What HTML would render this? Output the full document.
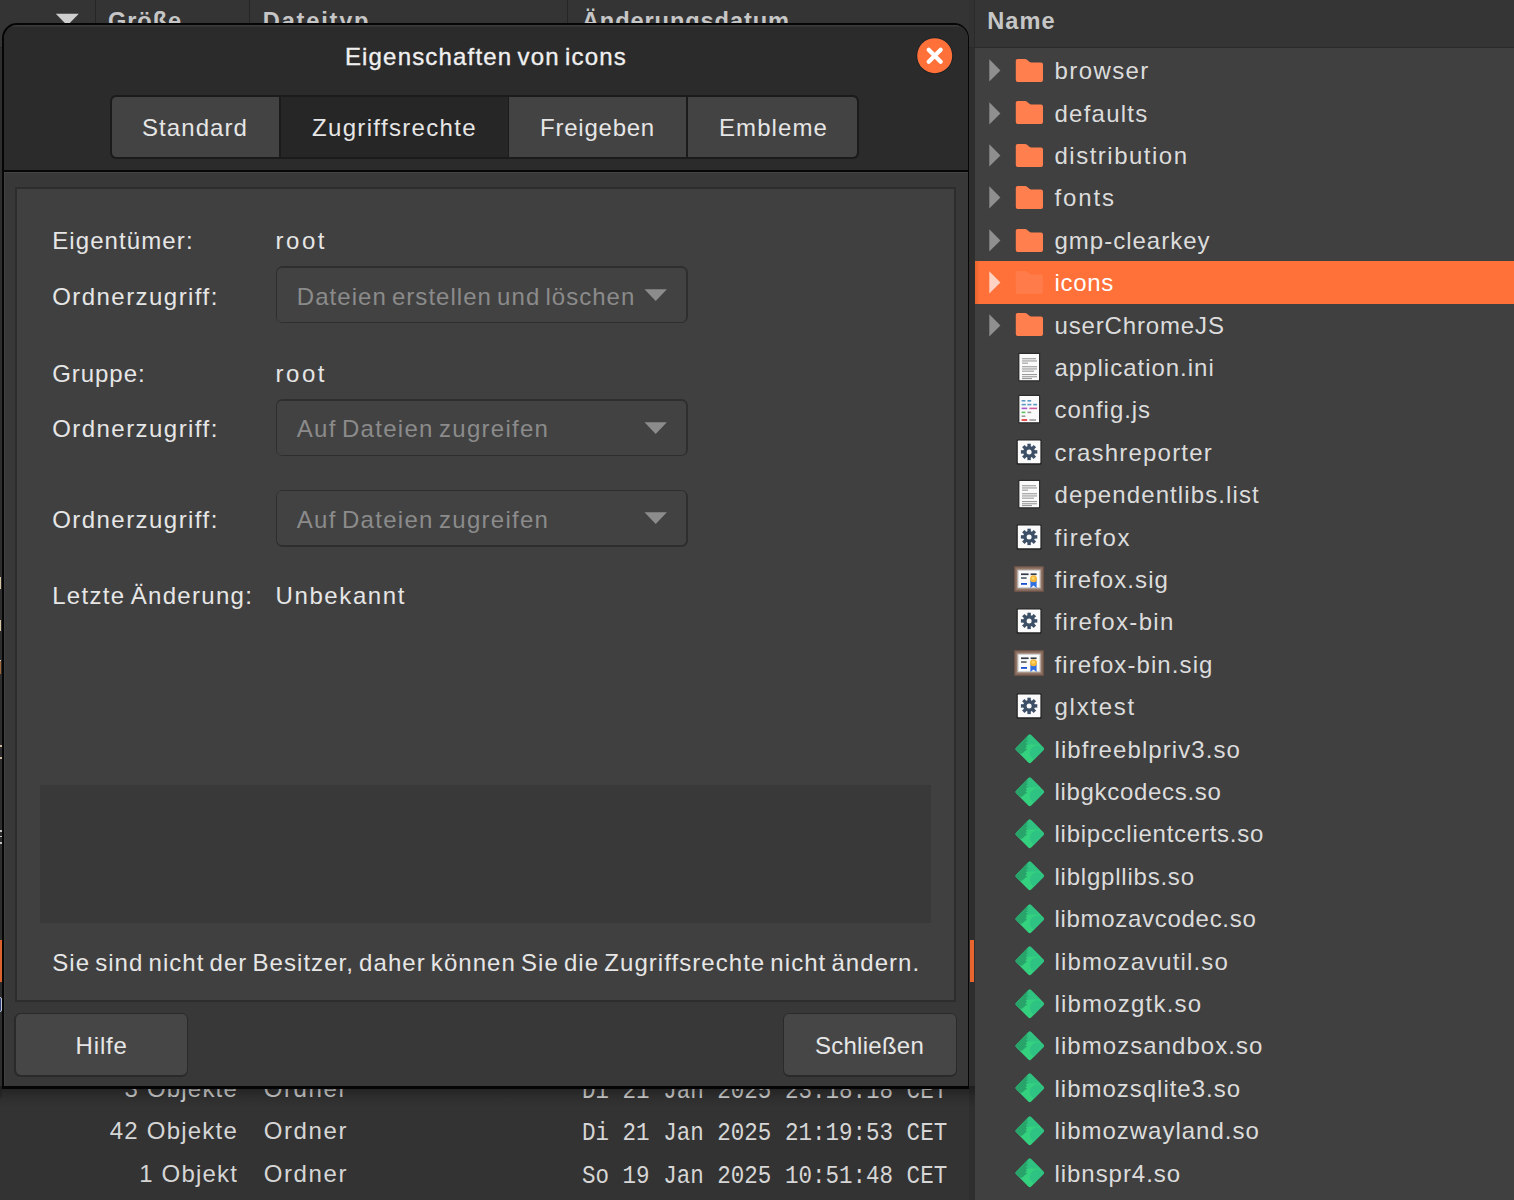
<!DOCTYPE html><html lang="de"><head><meta charset="utf-8"><title>Eigenschaften von icons</title><style>

*{margin:0;padding:0;box-sizing:border-box}
html,body{width:1514px;height:1200px;overflow:hidden;background:#333}
body{position:relative;font-family:"Liberation Sans",sans-serif;font-size:24.0px;color:#dedede}
.a{position:absolute}
.t{position:absolute;white-space:pre;line-height:30px;height:30px}
.d,.dis,.ti{word-spacing:-2.6px}
.f{color:#dcdcdc}.sel{color:#fff}
.hd{font-weight:bold;color:#c6c6c6;font-size:23.6px}
.b{color:#d6d6d6}
.m{font-family:"Liberation Mono",monospace;color:#d6d6d6;transform-origin:0 50%;font-size:25.4px}
.ti{color:#f0f0f0;-webkit-text-stroke:0.35px #f0f0f0}
.d{color:#e6e6e6}
.dis{color:#8b8b8b}
.ic{position:absolute;overflow:visible}
.cb{left:275.6px;width:412.2px;height:57px;background:#2e2e2e;border-radius:6.5px}
.cbi{left:277.4px;width:408.6px;height:53.4px;background:#424242;border-radius:4.5px}
.bt{top:1012.8px;width:174.4px;height:64.2px;background:#2a2a2a;border-radius:6.5px}
.bti{top:1014.4px;width:171.2px;height:61px;background:#464646;border-radius:5px}

</style></head><body>
<svg width="0" height="0" style="position:absolute"><defs>
<path id="folder" d="M2.6 1 H10.2 Q11.2 1 12 1.7 L14.4 3.8 Q15.1 4.4 16.2 4.4 H26 Q28 4.4 28 6.4 V22 Q28 24 26 24 H2.8 Q0.8 24 0.8 22 V2.8 Q0.8 1 2.6 1 Z"/>
<g id="i-txt">
<rect x="4.2" y="0.8" width="22" height="28.6" rx="1" fill="#2c2c2c"/>
<rect x="5.4" y="2" width="19.6" height="26.2" fill="#fafafa"/>
<g fill="#9a9a9a"><rect x="8" y="6.2" width="14" height="1.1"/><rect x="8" y="8.4" width="15" height="1.1"/><rect x="8" y="10.6" width="6" height="1.1"/>
<rect x="8" y="14.2" width="15" height="1.1"/><rect x="8" y="16.4" width="15" height="1.1"/><rect x="8" y="18.6" width="12" height="1.1"/>
<rect x="8" y="22" width="15" height="1.1"/><rect x="8" y="24.2" width="15" height="1.1"/><rect x="8" y="26" width="10" height="1.1"/></g>
</g>
<g id="i-js">
<rect x="4.2" y="0.8" width="22" height="28.6" rx="1" fill="#2c2c2c"/>
<rect x="5.4" y="2" width="19.6" height="26.2" fill="#fafafa"/>
<g><rect x="7.6" y="6" width="3.8" height="1.6" fill="#5b9bc6"/><rect x="13.4" y="6" width="3.8" height="1.6" fill="#5b9bc6"/>
<rect x="7.6" y="9.8" width="4.2" height="1.6" fill="#5b9bc6"/><rect x="13.4" y="9.8" width="4" height="1.6" fill="#5b9bc6"/><rect x="19.2" y="9.8" width="3.8" height="1.6" fill="#5b9bc6"/>
<rect x="7.6" y="13.6" width="5.6" height="1.6" fill="#a45cc9"/><rect x="15.4" y="13.6" width="7.6" height="1.6" fill="#d05a9a"/>
<rect x="7.6" y="17.6" width="3.8" height="1.6" fill="#5cc05c"/><rect x="13.4" y="17.6" width="3.8" height="1.6" fill="#9a9a9a"/>
<rect x="7.6" y="21.4" width="3.8" height="1.6" fill="#9a9a9a"/>
<rect x="7.6" y="25.2" width="5.6" height="1.6" fill="#e02b2b"/><rect x="15.4" y="25.2" width="6.6" height="1.6" fill="#9a9a9a"/></g>
</g>
<g id="i-exe">
<rect x="2.6" y="2.4" width="25" height="25.4" rx="1.4" fill="#222"/>
<rect x="3.8" y="3.6" width="22.6" height="22.6" rx="0.6" fill="#fafafa"/>
<g transform="translate(15.1 14.9)" fill="#3d4f66">
<circle r="5.9"/>
<g id="teeth"><rect x="-1.7" y="-8.2" width="3.4" height="16.4"/><rect x="-8.2" y="-1.7" width="16.4" height="3.4"/></g>
<use href="#teeth" transform="rotate(45)"/>
<circle r="2.5" fill="#fafafa"/>
</g>
</g>
<g id="i-sig">
<rect x="0" y="2" width="30" height="26" rx="1" fill="#6b5248"/>
<rect x="1.4" y="3.4" width="27.2" height="23.2" fill="#927465"/>
<rect x="3.4" y="5.6" width="23.2" height="18.8" fill="#c9c9c9"/>
<rect x="4.6" y="6.8" width="20.8" height="16.4" fill="#fafafa"/>
<rect x="7" y="9.4" width="7.6" height="1.7" fill="#333a4a"/><rect x="16.6" y="9.4" width="6" height="1.7" fill="#333a4a"/>
<rect x="7" y="13.2" width="5.6" height="1.7" fill="#5a6070"/>
<rect x="7" y="19" width="6" height="1.8" fill="#1a4fd0"/>
<path d="M16.4 15 H22.6 V24 L19.5 21.6 L16.4 24 Z" fill="#2f6fe0"/>
<circle cx="19.5" cy="14.8" r="3.5" fill="#f4b73a"/><circle cx="19.2" cy="14.2" r="1.6" fill="#fbd568"/>
</g>
<g id="i-so">
<clipPath id="dclip"><path d="M15 0.6 Q15.8 0.6 16.5 1.3 L29 13.6 Q29.9 14.8 29 15.9 L16.5 28.6 Q15 30 13.5 28.6 L1 16 Q0.1 14.9 1 13.8 L13.5 1.3 Q14.2 0.6 15 0.6 Z"/></clipPath>
<g clip-path="url(#dclip)">
<rect width="30" height="30" fill="#34d27f"/>
<path d="M11 10.6 L30 10.6 L30 0 L8 0 Z" fill="#2fc281"/>
<circle cx="22.8" cy="18.9" r="7.7" fill="#2fc383"/>
<path d="M0 0 L12.6 0 L12.6 5.4 L11.4 5.4 L11.4 6.6 L12.8 6.6 L12.8 8 L11.2 8 L11.2 9.4 L12.8 9.4 L12.8 10.8 L11.2 10.8 L11.2 12.2 L12.2 12.2 L12.2 13.6 L10.8 13.6 L10.8 15 L12 15 L12 16.2 L10.4 16.2 L10.4 17.4 L9.2 17.4 L9.2 18.6 L8 18.6 L7.4 19.8 L0 19.8 Z" fill="#28a36a"/>
<path d="M0 14.5 L15 29.5 L30 14.5 L30 17 L15 32 L0 17 Z" fill="#2bb574" opacity="0.0"/>
</g>
</g>
</defs></svg>
<!-- left pane (behind dialog) -->
<div class="a" style="left:0;top:0;width:975px;height:1200px;background:#333333"></div>
<div class="a" style="left:0;top:0;width:975px;height:47px;background:#343434"></div>
<div class="a" style="left:0;top:46.6px;width:975px;height:1.6px;background:#272727"></div>
<div class="a" style="left:95px;top:0;width:1.2px;height:47px;background:#262626"></div>
<div class="a" style="left:249px;top:0;width:1.2px;height:47px;background:#262626"></div>
<div class="a" style="left:567px;top:0;width:1.2px;height:47px;background:#262626"></div>
<svg class="ic" style="left:55px;top:13px" width="25" height="13" viewBox="0 0 25 13"><path d="M0.8 0.8 H23.8 L12.3 12.4 Z" fill="#cfcfcf"/></svg>
<div class="a" style="left:0;top:48px;width:2.4px;height:1050px;background:#2d2d2d"></div>
<!-- left edge tidbits -->
<div class="a" style="left:0;top:577.3px;width:1.4px;height:11.7px;background:#d6c6a6"></div>
<div class="a" style="left:0;top:619.5px;width:1.4px;height:11.5px;background:#d6c6a6"></div>
<div class="a" style="left:0;top:660px;width:1.4px;height:13.8px;background:#a06838;border-top:1.2px solid #ddd"></div>
<div class="a" style="left:0;top:745px;width:1.8px;height:2px;background:#cbb89a"></div>
<div class="a" style="left:0;top:757px;width:1.8px;height:2px;background:#cbb89a"></div>
<div class="a" style="left:0;top:830.2px;width:2.2px;height:1.6px;background:#c4c4c4"></div>
<div class="a" style="left:0;top:835.8px;width:2.2px;height:1.6px;background:#c4c4c4"></div>
<div class="a" style="left:0;top:842px;width:2.2px;height:1.8px;background:#c4c4c4"></div>
<div class="a" style="left:0;top:939.8px;width:2.3px;height:42px;background:#d9622e"></div>
<div class="a" style="left:-2px;top:996.6px;width:4px;height:15.2px;border:1.3px solid #c4c4d0;border-radius:2px;background:#2a3f78"></div>
<!-- pane divider + right pane -->
<div class="a" style="left:969px;top:0;width:6px;height:1200px;background:#2e2e2e"></div>
<div class="a" style="left:969px;top:0;width:6px;height:47px;background:#323232;border-right:1px solid #2b2b2b"></div>
<div class="a" style="left:969.5px;top:939.6px;width:4px;height:42.4px;background:#e8652f"></div>
<div class="a" style="left:975px;top:0;width:539px;height:1200px;background:#404040"></div>
<div class="a" style="left:975px;top:0;width:539px;height:47px;background:#353535"></div>
<div class="a" style="left:969px;top:46.6px;width:545px;height:1.8px;background:#2a2a2a"></div>
<div class="a" style="left:975px;top:261px;width:539px;height:42.6px;background:linear-gradient(90deg,#e8652f 0,#ff7139 5px,#ff7139 100%)"></div>

<svg class="ic" style="left:988.5px;top:59.20px" width="12" height="23" viewBox="0 0 12 23"><path d="M0.3 0.3 L11.4 11.4 L0.3 22.5 Z" fill="#8f8f8f"/></svg><svg class="ic" style="left:1015px;top:58.00px" width="29" height="25" viewBox="0 0 29 25"><use href="#folder" fill="#ff7f4f"/></svg><svg class="ic" style="left:988.5px;top:101.60px" width="12" height="23" viewBox="0 0 12 23"><path d="M0.3 0.3 L11.4 11.4 L0.3 22.5 Z" fill="#8f8f8f"/></svg><svg class="ic" style="left:1015px;top:100.40px" width="29" height="25" viewBox="0 0 29 25"><use href="#folder" fill="#ff7f4f"/></svg><svg class="ic" style="left:988.5px;top:144.00px" width="12" height="23" viewBox="0 0 12 23"><path d="M0.3 0.3 L11.4 11.4 L0.3 22.5 Z" fill="#8f8f8f"/></svg><svg class="ic" style="left:1015px;top:142.80px" width="29" height="25" viewBox="0 0 29 25"><use href="#folder" fill="#ff7f4f"/></svg><svg class="ic" style="left:988.5px;top:186.40px" width="12" height="23" viewBox="0 0 12 23"><path d="M0.3 0.3 L11.4 11.4 L0.3 22.5 Z" fill="#8f8f8f"/></svg><svg class="ic" style="left:1015px;top:185.20px" width="29" height="25" viewBox="0 0 29 25"><use href="#folder" fill="#ff7f4f"/></svg><svg class="ic" style="left:988.5px;top:228.80px" width="12" height="23" viewBox="0 0 12 23"><path d="M0.3 0.3 L11.4 11.4 L0.3 22.5 Z" fill="#8f8f8f"/></svg><svg class="ic" style="left:1015px;top:227.60px" width="29" height="25" viewBox="0 0 29 25"><use href="#folder" fill="#ff7f4f"/></svg><svg class="ic" style="left:988.5px;top:271.20px" width="12" height="23" viewBox="0 0 12 23"><path d="M0.3 0.3 L11.4 11.4 L0.3 22.5 Z" fill="#ffd3c4"/></svg><svg class="ic" style="left:1015px;top:270.00px" width="29" height="25" viewBox="0 0 29 25"><use href="#folder" fill="#ff7c4a"/></svg><svg class="ic" style="left:988.5px;top:313.60px" width="12" height="23" viewBox="0 0 12 23"><path d="M0.3 0.3 L11.4 11.4 L0.3 22.5 Z" fill="#8f8f8f"/></svg><svg class="ic" style="left:1015px;top:312.40px" width="29" height="25" viewBox="0 0 29 25"><use href="#folder" fill="#ff7f4f"/></svg><svg class="ic" style="left:1014px;top:352.00px" width="30" height="30" viewBox="0 0 30 30" preserveAspectRatio="none"><use href="#i-txt"/></svg><svg class="ic" style="left:1014px;top:394.40px" width="30" height="30" viewBox="0 0 30 30" preserveAspectRatio="none"><use href="#i-js"/></svg><svg class="ic" style="left:1014px;top:436.80px" width="30" height="30" viewBox="0 0 30 30" preserveAspectRatio="none"><use href="#i-exe"/></svg><svg class="ic" style="left:1014px;top:479.20px" width="30" height="30" viewBox="0 0 30 30" preserveAspectRatio="none"><use href="#i-txt"/></svg><svg class="ic" style="left:1014px;top:521.60px" width="30" height="30" viewBox="0 0 30 30" preserveAspectRatio="none"><use href="#i-exe"/></svg><svg class="ic" style="left:1014px;top:563.60px" width="30" height="30" viewBox="0 0 30 30" preserveAspectRatio="none"><use href="#i-sig"/></svg><svg class="ic" style="left:1014px;top:606.40px" width="30" height="30" viewBox="0 0 30 30" preserveAspectRatio="none"><use href="#i-exe"/></svg><svg class="ic" style="left:1014px;top:648.40px" width="30" height="30" viewBox="0 0 30 30" preserveAspectRatio="none"><use href="#i-sig"/></svg><svg class="ic" style="left:1014px;top:691.20px" width="30" height="30" viewBox="0 0 30 30" preserveAspectRatio="none"><use href="#i-exe"/></svg><svg class="ic" style="left:1014.5px;top:734.10px" width="29.5" height="30" viewBox="0 0 30 30" preserveAspectRatio="none"><use href="#i-so"/></svg><svg class="ic" style="left:1014.5px;top:776.50px" width="29.5" height="30" viewBox="0 0 30 30" preserveAspectRatio="none"><use href="#i-so"/></svg><svg class="ic" style="left:1014.5px;top:818.90px" width="29.5" height="30" viewBox="0 0 30 30" preserveAspectRatio="none"><use href="#i-so"/></svg><svg class="ic" style="left:1014.5px;top:861.30px" width="29.5" height="30" viewBox="0 0 30 30" preserveAspectRatio="none"><use href="#i-so"/></svg><svg class="ic" style="left:1014.5px;top:903.70px" width="29.5" height="30" viewBox="0 0 30 30" preserveAspectRatio="none"><use href="#i-so"/></svg><svg class="ic" style="left:1014.5px;top:946.10px" width="29.5" height="30" viewBox="0 0 30 30" preserveAspectRatio="none"><use href="#i-so"/></svg><svg class="ic" style="left:1014.5px;top:988.50px" width="29.5" height="30" viewBox="0 0 30 30" preserveAspectRatio="none"><use href="#i-so"/></svg><svg class="ic" style="left:1014.5px;top:1030.90px" width="29.5" height="30" viewBox="0 0 30 30" preserveAspectRatio="none"><use href="#i-so"/></svg><svg class="ic" style="left:1014.5px;top:1073.30px" width="29.5" height="30" viewBox="0 0 30 30" preserveAspectRatio="none"><use href="#i-so"/></svg><svg class="ic" style="left:1014.5px;top:1115.70px" width="29.5" height="30" viewBox="0 0 30 30" preserveAspectRatio="none"><use href="#i-so"/></svg><svg class="ic" style="left:1014.5px;top:1158.10px" width="29.5" height="30" viewBox="0 0 30 30" preserveAspectRatio="none"><use href="#i-so"/></svg>
<span class="t f" style="left:1054.50px;top:56.18px;letter-spacing:1.413px;">browser</span>
<span class="t f" style="left:1054.50px;top:98.58px;letter-spacing:1.242px;">defaults</span>
<span class="t f" style="left:1054.50px;top:140.98px;letter-spacing:1.495px;">distribution</span>
<span class="t f" style="left:1054.50px;top:183.38px;letter-spacing:1.894px;">fonts</span>
<span class="t f" style="left:1054.50px;top:225.78px;letter-spacing:0.996px;">gmp-clearkey</span>
<span class="t f sel" style="left:1054.50px;top:268.18px;letter-spacing:0.694px;">icons</span>
<span class="t f" style="left:1054.50px;top:310.58px;letter-spacing:0.849px;">userChromeJS</span>
<span class="t f" style="left:1054.50px;top:352.98px;letter-spacing:0.988px;">application.ini</span>
<span class="t f" style="left:1054.50px;top:395.38px;letter-spacing:0.939px;">config.js</span>
<span class="t f" style="left:1054.50px;top:437.78px;letter-spacing:1.213px;">crashreporter</span>
<span class="t f" style="left:1054.50px;top:480.18px;letter-spacing:1.099px;">dependentlibs.list</span>
<span class="t f" style="left:1054.50px;top:522.58px;letter-spacing:1.592px;">firefox</span>
<span class="t f" style="left:1054.50px;top:564.98px;letter-spacing:1.072px;">firefox.sig</span>
<span class="t f" style="left:1054.50px;top:607.38px;letter-spacing:1.352px;">firefox-bin</span>
<span class="t f" style="left:1054.50px;top:649.78px;letter-spacing:1.084px;">firefox-bin.sig</span>
<span class="t f" style="left:1054.50px;top:692.18px;letter-spacing:1.732px;">glxtest</span>
<span class="t f" style="left:1054.50px;top:734.58px;letter-spacing:1.083px;">libfreeblpriv3.so</span>
<span class="t f" style="left:1054.50px;top:776.98px;letter-spacing:0.684px;">libgkcodecs.so</span>
<span class="t f" style="left:1054.50px;top:819.38px;letter-spacing:0.738px;">libipcclientcerts.so</span>
<span class="t f" style="left:1054.50px;top:861.78px;letter-spacing:0.775px;">liblgpllibs.so</span>
<span class="t f" style="left:1054.50px;top:904.18px;letter-spacing:0.702px;">libmozavcodec.so</span>
<span class="t f" style="left:1054.50px;top:946.58px;letter-spacing:1.140px;">libmozavutil.so</span>
<span class="t f" style="left:1054.50px;top:988.98px;letter-spacing:1.197px;">libmozgtk.so</span>
<span class="t f" style="left:1054.50px;top:1031.38px;letter-spacing:1.056px;">libmozsandbox.so</span>
<span class="t f" style="left:1054.50px;top:1073.78px;letter-spacing:0.984px;">libmozsqlite3.so</span>
<span class="t f" style="left:1054.50px;top:1116.18px;letter-spacing:0.989px;">libmozwayland.so</span>
<span class="t f" style="left:1054.50px;top:1158.58px;letter-spacing:0.949px;">libnspr4.so</span>
<span class="t hd" style="left:108.00px;top:6.12px;letter-spacing:0.903px;">Größe</span>
<span class="t hd" style="left:262.80px;top:6.12px;letter-spacing:1.801px;">Dateityp</span>
<span class="t hd" style="left:581.90px;top:6.12px;letter-spacing:0.906px;">Änderungsdatum</span>
<span class="t hd" style="left:987.20px;top:6.12px;letter-spacing:1.034px;">Name</span>
<span class="t b" style="left:124.50px;top:1074.38px;letter-spacing:1.196px;">3 Objekte</span>
<span class="t b" style="left:263.80px;top:1074.38px;letter-spacing:1.583px;">Ordner</span>
<span class="t m" style="left:581.90px;top:1077.23px;transform:scaleX(0.8877);">Di 21 Jan 2025 23:18:18 CET</span>
<span class="t b" style="left:109.80px;top:1116.48px;letter-spacing:1.212px;">42 Objekte</span>
<span class="t b" style="left:263.80px;top:1116.48px;letter-spacing:1.583px;">Ordner</span>
<span class="t m" style="left:581.90px;top:1119.33px;transform:scaleX(0.8877);">Di 21 Jan 2025 21:19:53 CET</span>
<span class="t b" style="left:139.20px;top:1158.88px;letter-spacing:1.176px;">1 Objekt</span>
<span class="t b" style="left:263.80px;top:1158.88px;letter-spacing:1.583px;">Ordner</span>
<span class="t m" style="left:581.90px;top:1161.73px;transform:scaleX(0.8877);">So 19 Jan 2025 10:51:48 CET</span>
<!-- dialog -->
<div class="a" style="left:0;top:1086px;width:975px;height:22px;background:linear-gradient(180deg,rgba(0,0,0,.36),rgba(0,0,0,.1) 55%,rgba(0,0,0,0))"></div>
<div class="a" id="dlg" style="left:2.2px;top:23px;width:967.2px;height:1065.6px;background:#050505;border-radius:15px 15px 0 0"></div>
<div class="a" style="left:4px;top:24.8px;width:963.8px;height:1061.4px;background:#383838;border-radius:13.5px 13.5px 0 0;overflow:hidden">
  <div class="a" style="left:0;top:0;width:100%;height:146px;background:#2b2b2b;box-shadow:inset 0 1.4px 0 #3b3b3b"></div>
  <div class="a" style="left:0;top:145px;width:100%;height:2px;background:#070707"></div>
  <div class="a" style="left:0;top:147px;width:100%;height:1.2px;background:#444"></div>
  <div class="a" style="left:0;top:148px;width:1.2px;height:920px;background:#404040"></div>
</div>
<!-- close button -->
<svg class="ic" style="left:915px;top:36px" width="40" height="40" viewBox="0 0 40 40"><circle cx="19.7" cy="19.7" r="18.4" fill="#1b2226"/><circle cx="19.7" cy="19.7" r="17.5" fill="#ff7139"/><path d="M13.7 13.7 L25.7 25.7 M25.7 13.7 L13.7 25.7" stroke="#fff" stroke-width="4.2" stroke-linecap="round"/></svg>
<!-- tabs -->
<div class="a" style="left:110.4px;top:95px;width:748.6px;height:64px;background:#1b1b1b;border-radius:6px"></div>
<div class="a" style="left:112px;top:96.6px;width:167.4px;height:60.8px;background:#434343;border-radius:4.5px 0 0 4.5px"></div>
<div class="a" style="left:280.6px;top:96.6px;width:227px;height:60.8px;background:#262626"></div>
<div class="a" style="left:508.8px;top:96.6px;width:177.6px;height:60.8px;background:#434343"></div>
<div class="a" style="left:687.8px;top:96.6px;width:169.6px;height:60.8px;background:#434343;border-radius:0 4.5px 4.5px 0"></div>
<!-- inner frame -->
<div class="a" style="left:15.3px;top:187.3px;width:940.7px;height:814.4px;background:#2d2d2d"></div>
<div class="a" style="left:17.1px;top:189.1px;width:937.1px;height:810.9px;background:#404040"></div>
<!-- combos -->
<div class="a cb" style="top:266.4px"></div><div class="a cbi" style="top:268.2px"></div>
<div class="a cb" style="top:399.4px"></div><div class="a cbi" style="top:401.2px"></div>
<div class="a cb" style="top:489.6px"></div><div class="a cbi" style="top:491.4px"></div>
<svg class="ic" style="left:644px;top:289px" width="24" height="13" viewBox="0 0 24 13"><path d="M0.5 0.3 H22.9 L11.7 11.9 Z" fill="#8c8c8c"/></svg>
<svg class="ic" style="left:644px;top:422px" width="24" height="13" viewBox="0 0 24 13"><path d="M0.5 0.3 H22.9 L11.7 11.9 Z" fill="#8c8c8c"/></svg>
<svg class="ic" style="left:644px;top:512px" width="24" height="13" viewBox="0 0 24 13"><path d="M0.5 0.3 H22.9 L11.7 11.9 Z" fill="#8c8c8c"/></svg>
<!-- dark box -->
<div class="a" style="left:40px;top:785px;width:890.8px;height:138px;background:#393939"></div>
<!-- buttons -->
<div class="a bt" style="left:14px"></div><div class="a bti" style="left:15.6px"></div>
<div class="a bt" style="left:782.8px"></div><div class="a bti" style="left:784.4px"></div>

<span class="t ti" style="left:344.90px;top:41.58px;letter-spacing:1.180px;">Eigenschaften von icons</span>
<span class="t d" style="left:142.00px;top:113.18px;letter-spacing:1.074px;">Standard</span>
<span class="t d" style="left:312.00px;top:113.18px;letter-spacing:1.336px;">Zugriffsrechte</span>
<span class="t d" style="left:540.00px;top:113.18px;letter-spacing:0.769px;">Freigeben</span>
<span class="t d" style="left:719.00px;top:113.18px;letter-spacing:1.089px;">Embleme</span>
<span class="t d" style="left:52.20px;top:226.08px;letter-spacing:1.099px;">Eigentümer:</span>
<span class="t d" style="left:275.50px;top:226.08px;letter-spacing:2.560px;">root</span>
<span class="t d" style="left:52.20px;top:281.98px;letter-spacing:1.450px;">Ordnerzugriff:</span>
<span class="t dis" style="left:296.80px;top:281.98px;letter-spacing:1.041px;">Dateien erstellen und löschen</span>
<span class="t d" style="left:52.20px;top:358.68px;letter-spacing:0.954px;">Gruppe:</span>
<span class="t d" style="left:275.50px;top:358.68px;letter-spacing:2.560px;">root</span>
<span class="t d" style="left:52.20px;top:414.18px;letter-spacing:1.450px;">Ordnerzugriff:</span>
<span class="t dis" style="left:296.80px;top:414.18px;letter-spacing:1.275px;">Auf Dateien zugreifen</span>
<span class="t d" style="left:52.20px;top:505.28px;letter-spacing:1.450px;">Ordnerzugriff:</span>
<span class="t dis" style="left:296.80px;top:505.28px;letter-spacing:1.275px;">Auf Dateien zugreifen</span>
<span class="t d" style="left:52.20px;top:581.48px;letter-spacing:1.300px;">Letzte Änderung:</span>
<span class="t d" style="left:275.50px;top:581.48px;letter-spacing:1.601px;">Unbekannt</span>
<span class="t d" style="left:52.20px;top:947.68px;letter-spacing:1.050px;">Sie sind nicht der Besitzer, daher können Sie die Zugriffsrechte nicht ändern.</span>
<span class="t d" style="left:75.50px;top:1030.88px;letter-spacing:0.857px;">Hilfe</span>
<span class="t d" style="left:815.00px;top:1030.88px;letter-spacing:0.252px;">Schließen</span>
</body></html>
